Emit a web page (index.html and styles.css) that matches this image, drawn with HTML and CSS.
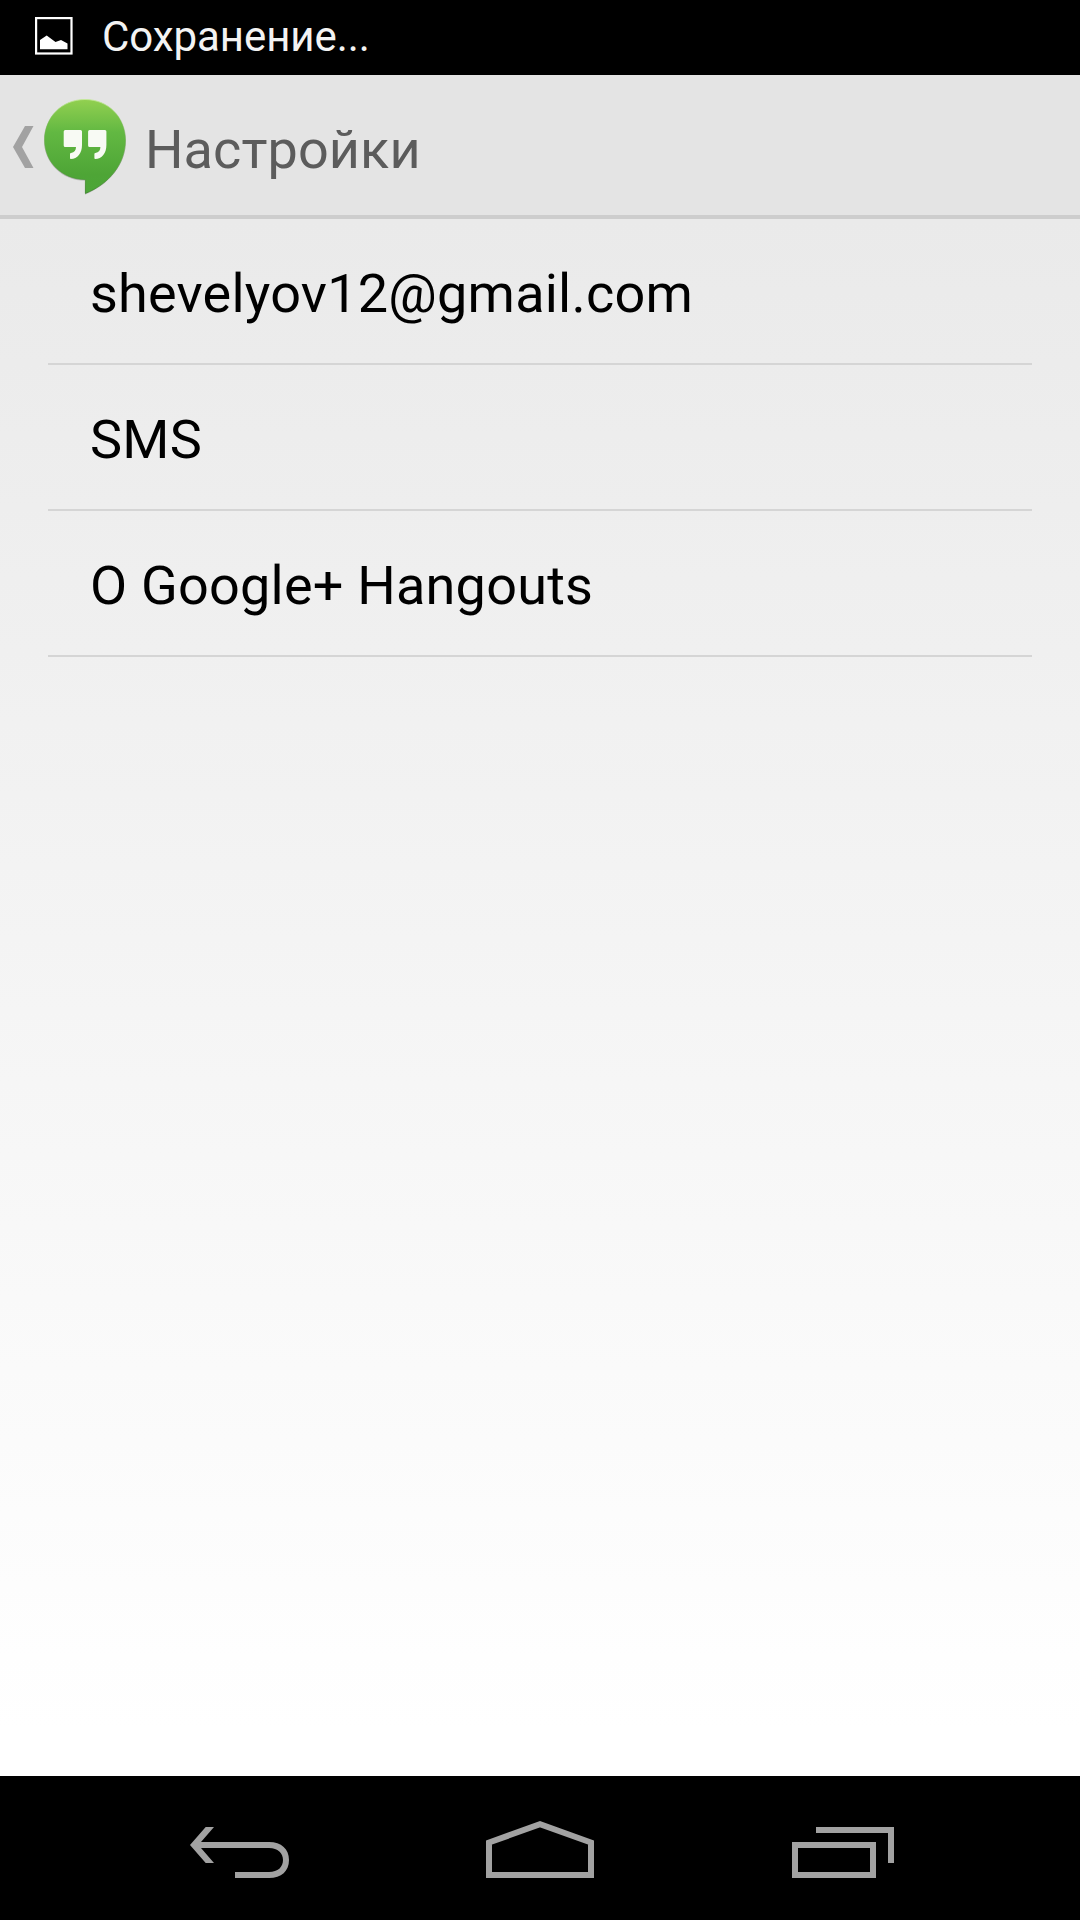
FILE: index.html
```html
<!DOCTYPE html>
<html lang="ru">
<head>
<meta charset="utf-8">
<title>Настройки</title>
<link rel="stylesheet" href="styles.css">
</head>
<body>
<div class="screen">
  <div class="status-bar">
    <svg class="status-icon" width="38" height="38" viewBox="0 0 38 38">
      <rect x="1.1" y="1.1" width="35.4" height="35.4" fill="none" stroke="#fff" stroke-width="2.2"/>
      <path d="M5 32.200V23L11.700 18.500L20.500 25L26 23L32.500 26.500V32.200Z" fill="#fff"/>
    </svg>
    <span class="status-text">Сохранение...</span>
  </div>
  <header class="action-bar">
    <svg class="up" width="21" height="42" viewBox="0 0 21 42"><path d="M12 0H20.500L9 21L20.500 42H12L0 21Z" fill="#a2a2a2"/></svg>
    <svg class="logo" width="86" height="100" viewBox="42 97 86 100">
      <defs>
        <linearGradient id="leaf" x1="0" y1="0" x2="0" y2="1">
          <stop offset="0" stop-color="#92d050"/>
          <stop offset=".35" stop-color="#62b842"/>
          <stop offset=".8" stop-color="#4ea536"/>
          <stop offset="1" stop-color="#4ca637"/>
        </linearGradient>
        <linearGradient id="rim" x1="0" y1="0" x2="0" y2="1">
          <stop offset="0" stop-color="#c4e89a"/>
          <stop offset=".25" stop-color="#7cc452" stop-opacity=".3"/>
          <stop offset="1" stop-color="#388426" stop-opacity=".8"/>
        </linearGradient>
      </defs>
      <path d="M85 99.500C108 99.500 126 117 126 140C126 164 109 184 85 194V180C62 180 44 162 44 140C44 117 62 99.500 85 99.500Z" fill="#000" opacity=".18" transform="translate(0 .8)"/>
      <path d="M85 99.500C108 99.500 125.500 117 125.500 140C125.500 164 109 184 85.400 193.400V179.500C62 179.500 44.500 162 44.500 140C44.500 117 62 99.500 85 99.500Z" fill="url(#leaf)" stroke="url(#rim)"/>
      <g fill="#f8faf4">
        <path id="mark" d="M65.200 130H80.500Q82 130 82 131.500V145C82 153.500 77.500 158.700 70.800 159Q70 159 70 158V154Q70 153 71 152.900C74.500 152.300 76 150.500 76 147H65.200Q63.700 147 63.700 145.500V131.500Q63.700 130 65.200 130Z"/>
        <use href="#mark" x="24.400"/>
      </g>
    </svg>
    <h1 class="title">Настройки</h1>
  </header>
  <main class="content">
    <ul class="list">
      <li class="row">shevelyov12@gmail.com</li>
      <li class="row">SMS</li>
      <li class="row">О Google+ Hangouts</li>
    </ul>
  </main>
  <nav class="nav-bar">
    <svg class="back" width="100" height="52" viewBox="0 0 100 52"><path d="M15.700 6H24L11 21H79C91.500 21 99 28 99 39S91.500 57 79 57H45V51H79C88 51 93 46 93 39S88 27 79 27H11L24 42H15.700L0 24Z" fill="#a2a2a2"/></svg>
    <svg class="home" width="108" height="58" viewBox="0 0 108 58"><path d="M3 54V21.500L54 3.200L105 21.500V54Z" fill="none" stroke="#a2a2a2" stroke-width="6"/></svg>
    <svg class="recent" width="102" height="51" viewBox="0 0 102 51"><path d="M3 18H81V48H3ZM24 3H99V36" fill="none" stroke="#a2a2a2" stroke-width="6"/></svg>
  </nav>
</div>
</body>
</html>
```
FILE: styles.css
```css
* { box-sizing: border-box; margin: 0; padding: 0; }
body { font-family: Roboto, "Noto Sans", sans-serif; background: #000; }
svg { display: block; flex: none; overflow: visible; }
.screen { width: 1080px; height: 1920px; display: flex; flex-direction: column; overflow: hidden; }
.status-bar { height: 75px; flex: none; background: #000; color: #f3f3f3; display: flex; align-items: flex-start; padding: 17px 0 0 35px; }
.status-text { font-size: 42px; line-height: 50px; letter-spacing: -.06px; margin: -5px 0 0 29px; white-space: nowrap; }
.action-bar { height: 144px; flex: none; background: #e4e4e4; border-bottom: 4px solid #cdcdcd; display: flex; align-items: flex-start; }
.up { margin: 51px 0 0 13px; }
.logo { margin: 22px 0 0 8px; }
.title { font-size: 54px; line-height: 64px; letter-spacing: .1px; font-weight: 400; color: #5c5c5c; margin: 43px 0 0 17px; white-space: nowrap; }
.content { flex: 1; background: linear-gradient(#eaeaea, #fff 97%); }
.list { list-style: none; padding: 0 48px; }
.row { height: 146px; border-bottom: 2px solid #d5d5d5; padding: 43px 0 0 42px; font-size: 54px; line-height: 64px; letter-spacing: .22px; color: #000; white-space: nowrap; }
.nav-bar { height: 144px; flex: none; background: #000; display: flex; align-items: flex-start; }
.back { margin: 45px 0 0 190px; }
.home { margin: 45px 0 0 196px; }
.recent { margin: 51px 0 0 198px; }
```
